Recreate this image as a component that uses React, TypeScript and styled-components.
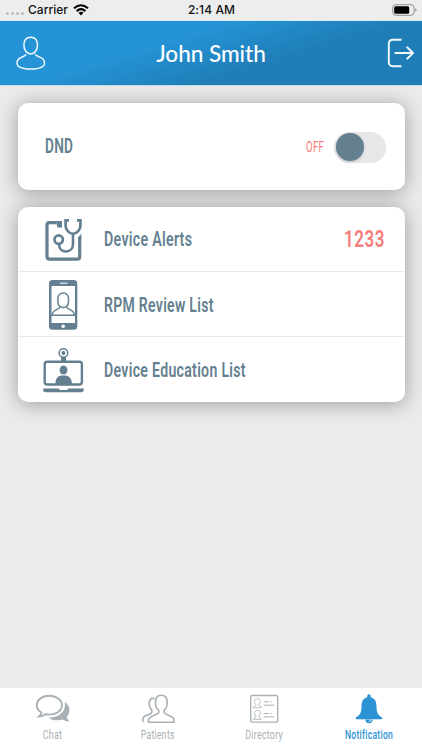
import React from "react";
import styled, { createGlobalStyle } from "styled-components";

const slate = "#647f8f";
const coral = "#f57d7b";
const blue = "#2c94d4";
const muted = "#a9b1b5";

const GlobalStyle = createGlobalStyle`
  * { box-sizing: border-box; }
  body { margin: 0; background: #ebebeb; }
`;

const Screen = styled.div`
  width: 422px;
  height: 750px;
  display: flex;
  flex-direction: column;
  overflow: hidden;
  background: #ebebeb;
`;

const StatusBar = styled.div`
  height: 21px;
  flex: none;
  display: grid;
  grid-template-columns: 1fr auto 1fr;
  align-items: center;
  padding: 0 5px 0 6px;
  border-bottom: 1px solid #dfebf2;
  background: #ededed;
  color: #111;
  font: 500 12px/20px Inter, "Liberation Sans", sans-serif;
`;

const Signal = styled.div`
  display: flex;
  align-items: center;
`;

const Dots = styled.div`
  display: flex;
  gap: 1.5px;
  margin: 7px 4px 0 0;
`;

const Dot = styled.i`
  width: 3.4px;
  height: 3.4px;
  border-radius: 50%;
  background: #bcbcbc;
`;

const Clock = styled.span`
  letter-spacing: 0.1px;
`;

const WifiIcon = styled.svg`
  margin-left: 5px;
`;

const BatteryIcon = styled.svg`
  justify-self: end;
`;

const Header = styled.header`
  height: 65px;
  flex: none;
  display: grid;
  grid-template-columns: 60px 1fr 60px;
  align-items: center;
  background: linear-gradient(163deg, #2594d6 36%, #1f7eb7 64%);
  border-bottom: 1px solid #c6dcea;
  color: #fff;
`;

const Title = styled.h1`
  margin: 2px 0 0;
  text-align: center;
  font: 500 22.6px/30px Lato, sans-serif;
  letter-spacing: -0.05px;
`;

const HeaderIcon = styled.svg<{ $end?: boolean }>`
  justify-self: ${(p) => (p.$end ? "end" : "start")};
  margin: ${(p) => (p.$end ? "0 7px 0 0" : "0 0 0 16px")};
  fill: none;
  stroke: #f1faff;
`;

const Content = styled.main`
  flex: 1;
  display: flex;
  flex-direction: column;
  gap: 17px;
  padding: 17px 17.5px 0;
`;

const Card = styled.section`
  border-radius: 10px;
  background: #fff;
  box-shadow: 0 2px 20px rgba(0, 0, 0, 0.34);
`;

const Condensed = styled.span<{ $size: number; $weight: number; $scale: number; $color: string; $origin?: string; $spacing?: number }>`
  display: inline-block;
  white-space: nowrap;
  font: ${(p) => p.$weight} ${(p) => p.$size}px/1.2 Roboto, "Liberation Sans", sans-serif;
  letter-spacing: ${(p) => p.$spacing ?? 0.4}px;
  color: ${(p) => p.$color};
  transform: scaleX(${(p) => p.$scale});
  transform-origin: ${(p) => p.$origin || "left"} center;
`;

const DndRow = styled(Card)`
  height: 87px;
  display: flex;
  align-items: center;
  padding: 1px 18.5px 0 27.5px;
`;

const DndState = styled.div`
  margin-left: auto;
  display: flex;
  align-items: center;
  gap: 10px;
`;

const Toggle = styled.button`
  width: 52px;
  height: 31px;
  padding: 1.5px;
  border: 0;
  border-radius: 16px;
  background: #e7e7ea;
`;

const Knob = styled.span`
  display: block;
  width: 28px;
  height: 28px;
  border-radius: 50%;
  background: #64808f;
  box-shadow: 0 1px 3px rgba(0, 0, 0, 0.18);
`;

const Row = styled.div`
  height: 65.2px;
  display: grid;
  grid-template-columns: 86.5px 1fr auto;
  align-items: center;
  padding-right: 20px;
  border-bottom: 1px solid #e9e9e9;
  &:last-child { height: 65px; border-bottom: 0; }
`;

const RowLabel = styled(Condensed)`
  margin-top: 2px;
`;

const RowIcon = styled.svg`
  width: 50px;
  height: 54px;
  margin-left: 20.5px;
  fill: none;
  stroke: ${slate};
`;

const TabBar = styled.nav`
  height: 62px;
  flex: none;
  display: grid;
  grid-template-columns: repeat(4, 1fr);
  background: #fff;
`;

const Tab = styled.div`
  display: flex;
  flex-direction: column;
  align-items: center;
  padding-top: 4px;
`;

const TabIcon = styled.svg`
  width: 40px;
  height: 34px;
  margin-bottom: 1px;
  fill: none;
  stroke: ${muted};
`;

const Stethoscope = () => (
  <RowIcon viewBox="38 212 50 54" strokeWidth="3.2">
    <path d="M56 222.700H49.500Q47 222.700 47 225V256.500Q47 259.200 49.500 259.200H77.300Q79.700 259.200 79.700 256.500V237" />
    <path d="M78.100 237.500L81.300 233.500V238.500H78.100z" fill={slate} stroke="none" />
    <path d="M55.500 221h6.500v6.500H57.500z" fill={slate} stroke="none" />
    <path d="M69 220.300H65.600V226C65.600 230 69.500 233.800 73 233.800S80.400 230 80.400 226V220.300H77" strokeWidth="2.700" />
    <path d="M73 233.800V244C73 248.500 70 251.500 66 251.500S59 249 59 244" strokeWidth="2.600" />
    <circle cx="58.700" cy="239.600" r="4.200" strokeWidth="2.700" />
  </RowIcon>
);

const PhonePerson = () => (
  <RowIcon viewBox="38 277 50 54">
    <rect x="49" y="280" width="28.300" height="49.700" rx="3.500" fill={slate} stroke="none" />
    <path d="M51.500 286h23.500v37H51.500z" fill="#fff" stroke="none" />
    <path d="M60 283.200h7.500" stroke="#fff" strokeWidth="1" />
    <circle cx="63.200" cy="326.300" r="1.800" fill="#fff" stroke="none" />
    <rect x="57.900" y="293" width="10.600" height="14.500" rx="5.200" strokeWidth="1.500" />
    <path d="M60 306.500C60 310 53 309 52 315.300H74.500C74 309 66.500 310 66.500 306.500" strokeWidth="1.400" />
  </RowIcon>
);

const VideoCall = () => (
  <RowIcon viewBox="38 343 50 54" strokeWidth="3">
    <circle cx="63.400" cy="353" r="4.300" strokeWidth="1.500" />
    <circle cx="63.400" cy="353" r="2" fill={slate} stroke="none" />
    <path d="M61 357h5v4h-5z" fill={slate} stroke="none" />
    <rect x="44.700" y="361.700" width="37.200" height="22.800" rx="2.500" strokeWidth="2.400" />
    <ellipse cx="63.500" cy="370" rx="3.900" ry="4.500" fill={slate} stroke="none" />
    <path d="M55.500 384V382Q56 376.500 61 375.500H66Q71 376.500 71.800 382V384z" fill={slate} stroke="none" />
    <path d="M43.200 388.600H58.500L60 390H67L68.500 388.600H83.700V390Q83.700 392.300 81.500 392.300H45.500Q43.200 392.300 43.200 390z" fill={slate} stroke="none" />
  </RowIcon>
);

const ChatIcon = () => (
  <TabIcon viewBox="33 692 40 34">
    <path d="M64.800 702C69.500 705 71.500 711 67 716.500Q66.700 719 69.500 721.800Q65.500 721.500 62.500 719.500C57.500 721 52 720.500 48.500 717.500C58 718 66.500 712 64.800 702z" fill={muted} stroke="none" />
    <path d="M49 695.800C42 695.800 36.800 700 36.800 705.200C36.800 708.500 38.500 710.800 41.500 712.500Q41.200 714.500 39 716.500Q43 716.300 45.500 714.200C54.500 716 61.900 711.500 61.900 705.200C61.900 700 56.500 695.800 49 695.800z" strokeWidth="1.900" />
  </TabIcon>
);

const PatientsIcon = () => (
  <TabIcon viewBox="138 692 40 34" strokeWidth="1.600">
    <path d="M154.500 698.700C151 697.500 149 700 149.200 704C149.300 707.500 150.500 709 151.800 710.200V712.500Q150.500 714.500 145.800 715.500Q142.800 716.500 142.800 720V722.200" />
    <path d="M161.300 695.300C157 695.300 155.500 697.500 155.500 702C155.500 706.500 156.500 708.800 158.700 710.200V712.300C158 715.500 148.500 715 148.500 720V722.200H174V720C174 715 164.800 715.500 164.100 712.300V710.200C166.200 708.800 167.200 706.500 167.200 702C167.200 697.500 165.500 695.300 161.300 695.300z" />
  </TabIcon>
);

const DirectoryIcon = () => (
  <TabIcon viewBox="243.500 692 40 34" strokeWidth="0.800">
    <rect x="250.200" y="695.500" width="27" height="26.600" rx="1.500" strokeWidth="1.400" />
    {[0, 11.7].map((y) => (
      <g key={y} transform={`translate(0 ${y})`}>
        <path d="M257 698.700C254 698.700 253.700 701 254.500 703.300L255.500 704.300V705.300C253.700 705.800 253 706.300 253 707.700H260.700C260.700 706.300 259.800 705.800 258.300 705.300V704.300C260.500 702 260.500 698.700 257 698.700z" />
        <path d="M263.200 701.800h5M269.800 701.800h1.500M263.200 705.200h10.500" strokeWidth="1" />
      </g>
    ))}
  </TabIcon>
);

const BellIcon = () => (
  <TabIcon viewBox="349 692 40 34">
    <path d="M367.300 697.200Q367 694.300 369 694.300T370.700 697.200C374.800 698.300 376.500 701.500 376.500 706C376.500 713 378 715 381.800 717.300Q383.300 718.700 381.500 719.200H356.500Q354.700 718.700 356.200 717.300C360 715 361.500 713 361.500 706C361.500 701.500 363.200 698.300 367.300 697.200z" fill={blue} stroke="none" />
    <path d="M365.600 719.500Q366 723 369 723T372.400 719.500" fill={blue} stroke={blue} strokeWidth="0.800" />
    <path d="M368.500 721.500Q371.500 721.500 371.200 719" stroke="#fff" strokeWidth="0.700" />
  </TabIcon>
);

const rows = [
  { label: "Device Alerts", icon: <Stethoscope />, scale: 0.728, count: "1233" },
  { label: "RPM Review List", icon: <PhonePerson />, scale: 0.72 },
  { label: "Device Education List", icon: <VideoCall />, scale: 0.725 },
];

const tabs = [
  { label: "Chat", icon: <ChatIcon />, scale: 0.67 },
  { label: "Patients", icon: <PatientsIcon />, scale: 0.66 },
  { label: "Directory", icon: <DirectoryIcon />, scale: 0.67 },
  { label: "Notification", icon: <BellIcon />, scale: 0.65, active: true },
];

export default function App() {
  return (
    <>
      <GlobalStyle />
      <Screen>
        <StatusBar>
          <Signal>
            <Dots><Dot /><Dot /><Dot /><Dot /></Dots>
            Carrier
            <WifiIcon width="16" height="12" viewBox="0 0 16 12" fill="none" stroke="#000" strokeWidth="2.100">
              <path d="M1 4.300Q8 -1.800 15 4.300M3.600 7.100Q8 3.200 12.400 7.100" />
              <path d="M5.500 8.800Q8 6.800 10.500 8.800L8 11.500z" fill="#000" stroke="none" />
            </WifiIcon>
          </Signal>
          <Clock>2:14 AM</Clock>
          <BatteryIcon width="25" height="12" viewBox="0 0 25 12">
            <rect x="0.700" y="0.700" width="21.300" height="10.600" rx="3" fill="none" stroke="#929292" />
            <rect x="2.200" y="2.200" width="15" height="7.600" rx="1.500" />
            <path d="M23.200 4.200Q24.600 5 24.600 6T23.200 7.800z" fill="#929292" />
          </BatteryIcon>
        </StatusBar>
        <Header>
          <HeaderIcon width="30" height="34" viewBox="16 36 30 34" strokeWidth="1.500">
            <path d="M30.700 37.200C26 37.200 23.900 40.500 23.900 45C23.900 50.500 27 54 30.700 54S37.500 50.500 37.500 45C37.500 40.500 35.400 37.200 30.700 37.200z" />
            <path d="M26.200 54.500C24 57.500 17 57 17 62.500C17 64 17.300 65.500 18.500 66.400C24 70 37.500 70 43 66.400C44.200 65.500 44.500 64 44.500 62.500C44.500 57 37.500 57.500 35.200 54.500" />
          </HeaderIcon>
          <Title>John Smith</Title>
          <HeaderIcon $end width="28" height="30" viewBox="387 38 28 30" strokeWidth="1.900">
            <path d="M401.500 39.800H393Q388.800 39.800 388.800 44V62Q388.800 66.200 393 66.200H401.500M394.500 53H413M406.700 46.800L413 53L406.700 59.200" />
          </HeaderIcon>
        </Header>
        <Content>
          <DndRow>
            <Condensed $size={19.5} $weight={600} $scale={0.7} $color={slate}>DND</Condensed>
            <DndState>
              <Condensed $size={15.5} $weight={400} $scale={0.62} $color={coral} $origin="right">OFF</Condensed>
              <Toggle aria-label="DND"><Knob /></Toggle>
            </DndState>
          </DndRow>
          <Card>
            {rows.map((r) => (
              <Row key={r.label}>
                {r.icon}
                <RowLabel $size={19.5} $weight={600} $scale={r.scale} $color={slate}>{r.label}</RowLabel>
                {r.count && <Condensed $size={23.5} $weight={600} $scale={0.72} $spacing={0.8} $color={coral} $origin="right">{r.count}</Condensed>}
              </Row>
            ))}
          </Card>
        </Content>
        <TabBar>
          {tabs.map((t) => (
            <Tab key={t.label}>
              {t.icon}
              <Condensed $size={13.2} $weight={t.active ? 500 : 400} $scale={t.scale} $color={t.active ? blue : muted} $origin="center">{t.label}</Condensed>
            </Tab>
          ))}
        </TabBar>
      </Screen>
    </>
  );
}
